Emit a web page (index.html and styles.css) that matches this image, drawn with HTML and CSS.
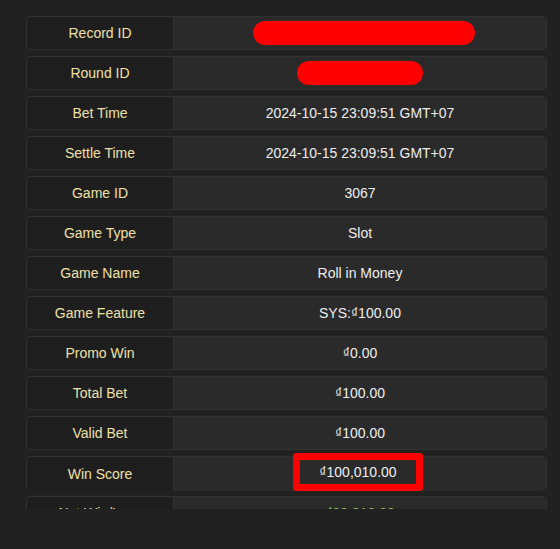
FILE: index.html
```html
<!DOCTYPE html>
<html lang="en">
<head>
  <meta charset="UTF-8">
  <title>Bet Record Detail</title>
  <link rel="stylesheet" href="styles.css">
</head>
<body>

  <div class="detail-wrap">
    <div class="detail-list">
      <div class="row">
        <div class="label">Record ID</div>
        <div class="value"><span class="redact redact-long"></span></div>
      </div>
      <div class="row">
        <div class="label">Round ID</div>
        <div class="value"><span class="redact redact-short"></span></div>
      </div>
      <div class="row">
        <div class="label">Bet Time</div>
        <div class="value">2024-10-15 23:09:51 GMT+07</div>
      </div>
      <div class="row">
        <div class="label">Settle Time</div>
        <div class="value">2024-10-15 23:09:51 GMT+07</div>
      </div>
      <div class="row">
        <div class="label">Game ID</div>
        <div class="value">3067</div>
      </div>
      <div class="row">
        <div class="label">Game Type</div>
        <div class="value">Slot</div>
      </div>
      <div class="row">
        <div class="label">Game Name</div>
        <div class="value">Roll in Money</div>
      </div>
      <div class="row">
        <div class="label">Game Feature</div>
        <div class="value">SYS:₫100.00</div>
      </div>
      <div class="row">
        <div class="label">Promo Win</div>
        <div class="value">₫0.00</div>
      </div>
      <div class="row">
        <div class="label">Total Bet</div>
        <div class="value">₫100.00</div>
      </div>
      <div class="row">
        <div class="label">Valid Bet</div>
        <div class="value">₫100.00</div>
      </div>
      <div class="row">
        <div class="label">Win Score</div>
        <div class="value"><span class="highlight">₫100,010.00</span></div>
      </div>
      <div class="row">
        <div class="label">Net Win/Loss</div>
        <div class="value positive">₫99,910.00</div>
      </div>
    </div>
  </div>

</body>
</html>
```

FILE: styles.css
```css
body {
  margin: 0;
  background-color: #212121;
  font-family: "Liberation Sans", Arial, sans-serif;
  font-size: 14px;
  color: #eeeeee;
}

.detail-wrap {
  height: 509px;
  overflow: hidden;
  padding: 16px 13px 0 26px;
  box-sizing: border-box;
}

.detail-list {
  display: flex;
  flex-direction: column;
  gap: 6px;
}

.row {
  display: grid;
  grid-template-columns: 147px 1fr;
  height: 34px;
  border: 1px solid #323232;
  border-radius: 4px;
  box-sizing: border-box;
  overflow: visible;
}

.label,
.value {
  display: flex;
  align-items: center;
  justify-content: center;
}

.label {
  background-color: #1e1e1e;
  color: #efe0a6;
  border-radius: 4px 0 0 4px;
  border-right: 1px solid #303030;
}

.value {
  background-color: #2a2a2a;
  border-radius: 0 4px 4px 0;
}

.value.positive {
  color: #8bc34a;
}

.redact {
  display: inline-block;
  height: 24px;
  border-radius: 12px;
  background-color: #ff0000;
}

.redact-long {
  width: 222px;
  margin-left: 8px;
}

.redact-short {
  width: 126px;
}

.highlight {
  display: inline-block;
  width: 116px;
  height: 24px;
  line-height: 24px;
  text-align: center;
  border: 7px solid #ff0000;
  border-radius: 3px;
  margin-top: -4px;
  margin-left: -4px;
}
```
